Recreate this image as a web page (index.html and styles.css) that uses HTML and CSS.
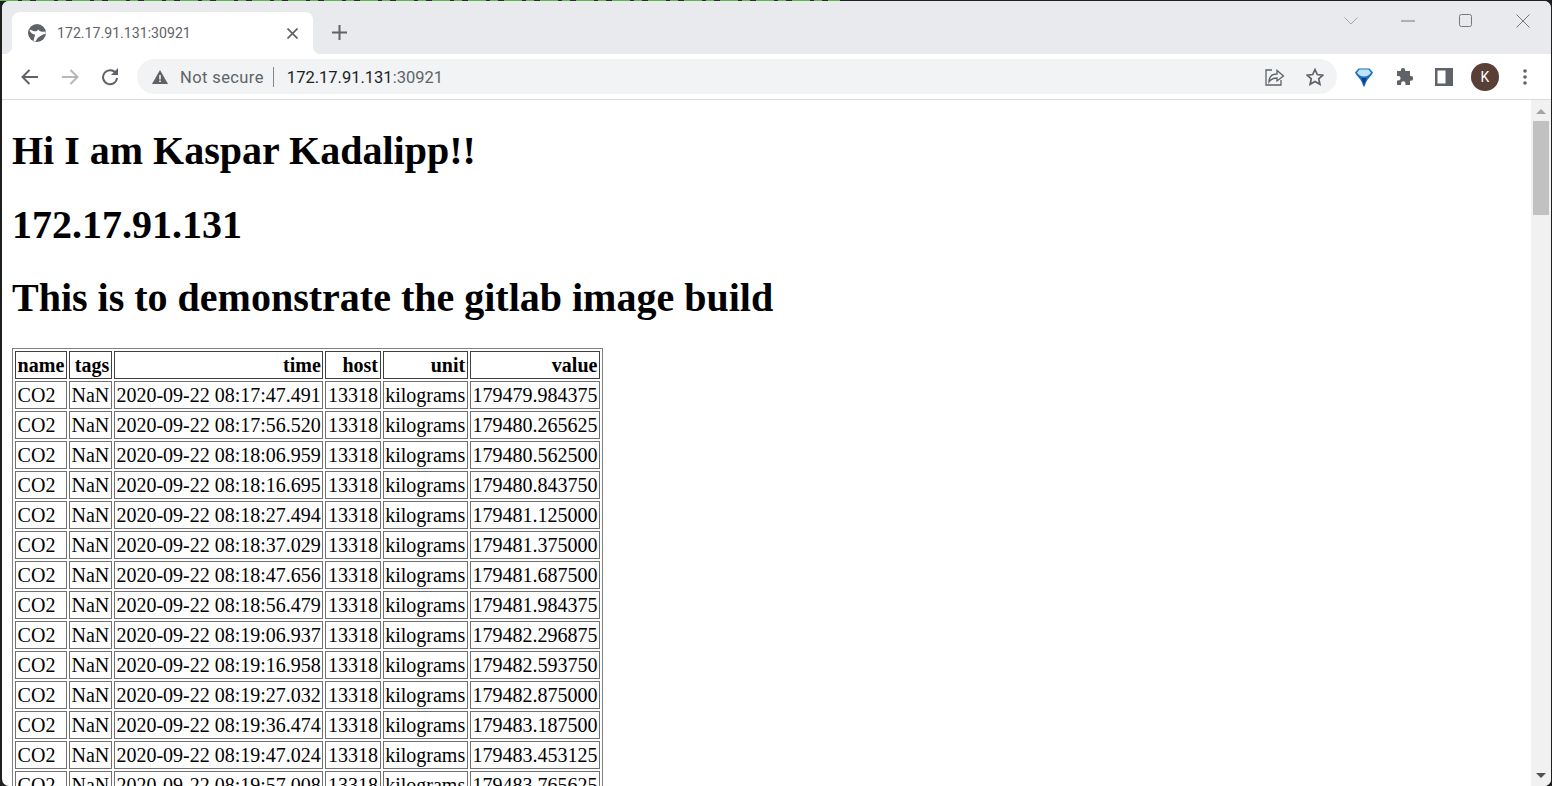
FILE: index.html
```html
<!DOCTYPE html>
<html lang="en">
  <head>
    <meta charset="UTF-8" />
    <meta name="viewport" content="width=device-width, initial-scale=1.0" />
    <title>172.17.91.131:30921</title>
    <link rel="stylesheet" href="styles.css">
  </head>
  <body>
    <div class="desktop-edge"></div>
    <div class="window">
      <!-- Tableiste -->
      <div class="tabstrip">
        <div class="tab">
          <svg class="favicon" width="18" height="18" viewBox="0 0 18 18">
            <circle cx="9" cy="9" r="9" fill="#5f6368"/>
            <path d="M10 5.500C12 8 15 8 17.500 7.500L17.700 10C14.500 10 13 12 11 13C9.500 14 8.500 15.500 7.500 17.500L5.500 16.800C6 14 7 12.500 7 10.500C5 10.500 3 9 1.500 6.500L2 5.500C4 6.500 6 7.500 8 7.300C9 7 9.500 6.500 10 5.500z" fill="#fff"/>
          </svg>
          <span class="tab-title">172.17.91.131:30921</span>
          <svg class="tab-close" width="11" height="11" viewBox="0 0 11 11">
            <path d="M0.500 0.500l10 10M10.500 0.500l-10 10" stroke="#5f6368" stroke-width="1.700"/>
          </svg>
        </div>
        <svg class="new-tab" width="15" height="15" viewBox="0 0 15 15">
          <path d="M7.500 0v15M0 7.500h15" stroke="#5f6368" stroke-width="2"/>
        </svg>
        <div class="window-controls">
          <svg class="ctl-chevron" width="14" height="8" viewBox="0 0 14 8">
            <path d="M0.500 0.500l6.500 6.500 6.500-6.500" fill="none" stroke="#a3a5a9" stroke-width="1"/>
          </svg>
          <svg class="ctl-min" width="14" height="2" viewBox="0 0 14 2">
            <path d="M0 1h14" stroke="#75777b" stroke-width="1"/>
          </svg>
          <svg class="ctl-max" width="14" height="14" viewBox="0 0 14 14">
            <rect x="0.500" y="0.500" width="12" height="12" rx="2" fill="none" stroke="#75777b"/>
          </svg>
          <svg class="ctl-close" width="14" height="14" viewBox="0 0 14 14">
            <path d="M0.500 0.500l13 13M13.500 0.500l-13 13" stroke="#75777b" stroke-width="1"/>
          </svg>
        </div>
      </div>

      <!-- Adressleiste -->
      <div class="toolbar">
        <svg class="nav-icon" width="18" height="16" viewBox="0 0 18 16">
          <path d="M17 8H2M8.500 1L1.500 8l7 7" fill="none" stroke="#5f6368" stroke-width="2"/>
        </svg>
        <svg class="nav-icon" width="18" height="16" viewBox="0 0 18 16">
          <path d="M1 8h15M9.500 1l7 7-7 7" fill="none" stroke="#b5b7ba" stroke-width="2"/>
        </svg>
        <svg class="nav-icon" width="18" height="18" viewBox="0 0 18 18">
          <path d="M15 5.500A7 7 0 1 0 16 10" fill="none" stroke="#5f6368" stroke-width="2"/>
          <path d="M10 7h7V0z" fill="#5f6368"/>
        </svg>
        <div class="omnibox">
          <svg class="warn" width="16" height="14" viewBox="0 0 16 14">
            <path d="M8 0L16 14H0z" fill="#5f6368"/>
            <path d="M7.200 5h1.600v4.500H7.200zM7.200 10.500h1.600V12H7.200z" fill="#f1f3f4"/>
          </svg>
          <span class="not-secure">Not secure</span>
          <span class="divider"></span>
          <span class="url"><span class="host-part">172.17.91.131</span>:30921</span>
          <svg class="share" width="20" height="18" viewBox="0 0 20 18">
            <path d="M7 2H1v15h15v-5" fill="none" stroke="#5f6368" stroke-width="1.300"/>
            <path d="M4 14c0-5 3-8 8-8V2.500L18.500 8 12 13V10c-4 0-6 1-8 4z" fill="none" stroke="#5f6368" stroke-width="1.300"/>
          </svg>
          <svg class="star" width="18" height="18" viewBox="0 0 18 18">
            <path d="M9 1.500l2.300 5 5.500.6-4.100 3.700 1.200 5.400L9 13.400l-4.900 2.800 1.200-5.400L1.200 7.100l5.500-.6z" fill="none" stroke="#5f6368" stroke-width="1.700"/>
          </svg>
        </div>
        <svg class="ext-gem" width="18" height="20" viewBox="0 0 18 20">
          <path d="M3.500 1.500h11L18 5.500C16 10 11.500 12 10.200 18L9 20 7.800 18C6.500 12 2 10 0 5.500z" fill="#1b6ec2"/>
          <path d="M4.500 2.500h9L16 5.500C14 9 11 9.500 9 9.500 7 9.500 4 9 2 5.500z" fill="#bfe3f8"/>
          <path d="M6.500 11h5L9 18z" fill="#0c3f8c"/>
        </svg>
        <svg class="ext-puzzle" width="18" height="18" viewBox="0 0 18 18">
          <path d="M7 0a2.200 2.200 0 0 1 2.200 2.200V3H14v5h.8a2.400 2.400 0 0 1 0 4.800H14V17H9.500v-1.500a2.200 2.200 0 0 0-4.400 0V17H1v-4.500h1.300a2.300 2.300 0 0 0 0-4.600H1V3h3.800v-.8A2.200 2.200 0 0 1 7 0z" fill="#5f6368"/>
        </svg>
        <svg class="ext-panel" width="18" height="18" viewBox="0 0 18 18">
          <path d="M0 0h18v18H0z" fill="#5f6368"/>
          <path d="M2.500 2.500h8v13h-8z" fill="#fff"/>
        </svg>
        <div class="avatar">K</div>
        <svg class="menu-dots" width="4" height="16" viewBox="0 0 4 16">
          <circle cx="2" cy="2" r="1.800" fill="#5f6368"/>
          <circle cx="2" cy="8" r="1.800" fill="#5f6368"/>
          <circle cx="2" cy="14" r="1.800" fill="#5f6368"/>
        </svg>
      </div>

      <!-- Seiteninhalt -->
      <div class="viewport">
        <div class="page">
          <h1>Hi I am Kaspar Kadalipp!!</h1>
          <h1>172.17.91.131</h1>
          <h1>This is to demonstrate the gitlab image build</h1>
          <table class="dataframe" border="1">
            <thead>
              <tr><th>name</th><th>tags</th><th>time</th><th>host</th><th>unit</th><th>value</th></tr>
            </thead>
            <tbody>
              <tr><td>CO2</td><td>NaN</td><td>2020-09-22 08:17:47.491</td><td>13318</td><td>kilograms</td><td>179479.984375</td></tr>
              <tr><td>CO2</td><td>NaN</td><td>2020-09-22 08:17:56.520</td><td>13318</td><td>kilograms</td><td>179480.265625</td></tr>
              <tr><td>CO2</td><td>NaN</td><td>2020-09-22 08:18:06.959</td><td>13318</td><td>kilograms</td><td>179480.562500</td></tr>
              <tr><td>CO2</td><td>NaN</td><td>2020-09-22 08:18:16.695</td><td>13318</td><td>kilograms</td><td>179480.843750</td></tr>
              <tr><td>CO2</td><td>NaN</td><td>2020-09-22 08:18:27.494</td><td>13318</td><td>kilograms</td><td>179481.125000</td></tr>
              <tr><td>CO2</td><td>NaN</td><td>2020-09-22 08:18:37.029</td><td>13318</td><td>kilograms</td><td>179481.375000</td></tr>
              <tr><td>CO2</td><td>NaN</td><td>2020-09-22 08:18:47.656</td><td>13318</td><td>kilograms</td><td>179481.687500</td></tr>
              <tr><td>CO2</td><td>NaN</td><td>2020-09-22 08:18:56.479</td><td>13318</td><td>kilograms</td><td>179481.984375</td></tr>
              <tr><td>CO2</td><td>NaN</td><td>2020-09-22 08:19:06.937</td><td>13318</td><td>kilograms</td><td>179482.296875</td></tr>
              <tr><td>CO2</td><td>NaN</td><td>2020-09-22 08:19:16.958</td><td>13318</td><td>kilograms</td><td>179482.593750</td></tr>
              <tr><td>CO2</td><td>NaN</td><td>2020-09-22 08:19:27.032</td><td>13318</td><td>kilograms</td><td>179482.875000</td></tr>
              <tr><td>CO2</td><td>NaN</td><td>2020-09-22 08:19:36.474</td><td>13318</td><td>kilograms</td><td>179483.187500</td></tr>
              <tr><td>CO2</td><td>NaN</td><td>2020-09-22 08:19:47.024</td><td>13318</td><td>kilograms</td><td>179483.453125</td></tr>
              <tr><td>CO2</td><td>NaN</td><td>2020-09-22 08:19:57.008</td><td>13318</td><td>kilograms</td><td>179483.765625</td></tr>
            </tbody>
          </table>
        </div>
        <div class="scrollbar">
          <div class="arrow-up"></div>
          <div class="thumb"></div>
          <div class="arrow-down"></div>
        </div>
      </div>
    </div>
  </body>
</html>
```

FILE: styles.css
```css
/* Browserfenster */
html, body {
    margin: 0;
    height: 100%;
    overflow: hidden;
    background: #1f1f1f;
}

.desktop-edge {
    width: 840px;
    height: 1px;
    background: repeating-linear-gradient(90deg, #5cb84a 0 18px, #2b2b2b 18px 22px, #5cb84a 22px 30px, #2b2b2b 30px 36px);
}

.window {
    display: flex;
    flex-direction: column;
    height: 785px;
    margin: 0 1px 0 2px;
    border-radius: 7px;
    overflow: hidden;
    background: #fff;
}

/* Tableiste */
.tabstrip {
    display: flex;
    align-items: flex-end;
    height: 53px;
    background: #e8eaed;
}

.tab {
    position: relative;
    display: flex;
    align-items: center;
    width: 301px;
    height: 42px;
    margin-left: 10px;
    padding: 0 15px 0 16px;
    box-sizing: border-box;
    border-radius: 8px 8px 0 0;
    background: #fff;
}

/* kleine Rundungen unten am Tab */
.tab::before,
.tab::after {
    content: "";
    position: absolute;
    bottom: 0;
    width: 8px;
    height: 8px;
}

.tab::before {
    left: -8px;
    background: radial-gradient(circle at 0 0, transparent 8px, #fff 8.500px);
}

.tab::after {
    right: -8px;
    background: radial-gradient(circle at 100% 0, transparent 8px, #fff 8.500px);
}

.favicon {
    margin-right: 11px;
}

.tab-title {
    flex: 1;
    font-family: "Roboto", sans-serif;
    font-size: 14.150px;
    color: #5f6368;
}

.new-tab {
    margin: 0 0 14px 19px;
}

.window-controls {
    display: flex;
    align-items: center;
    align-self: flex-start;
    margin: 13px 0 0 auto;
    padding-right: 21px;
}

.ctl-chevron {
    margin-right: 43px;
}

.ctl-min {
    margin-right: 44px;
}

.ctl-max {
    margin-right: 43px;
}

/* Adressleiste */
.toolbar {
    display: flex;
    align-items: center;
    height: 45px;
    border-bottom: 1px solid #dadce0;
    background: #fff;
}

.nav-icon {
    margin-left: 19px;
    margin-right: 3px;
}

.omnibox {
    display: flex;
    align-items: center;
    width: 1200px;
    height: 35px;
    margin-left: 15px;
    padding-left: 15px;
    box-sizing: border-box;
    border-radius: 18px;
    background: #f1f3f4;
    font-family: "Roboto", sans-serif;
    font-size: 16.500px;
}

.not-secure {
    margin-top: 2px;
    margin-left: 12px;
    letter-spacing: 0.400px;
    color: #5f6368;
}

.divider {
    width: 1px;
    height: 20px;
    margin: 0 13px 0 9px;
    background: #80868b;
}

.url {
    flex: 1;
    margin-top: 2px;
    color: #5f6368;
}

.host-part {
    color: #202124;
}

.share {
    margin-right: 21px;
}

.star {
    margin-right: 13px;
}

.ext-gem {
    margin-left: 18px;
}

.ext-puzzle {
    margin-left: 23px;
}

.ext-panel {
    margin-left: 21px;
}

.avatar {
    width: 28px;
    height: 28px;
    margin-left: 18px;
    border-radius: 50%;
    background: #5a3f36;
    color: #fff;
    font-family: "Roboto", sans-serif;
    font-size: 14px;
    line-height: 28px;
    text-align: center;
}

.menu-dots {
    margin-left: 24px;
}

/* Seiteninhalt */
.viewport {
    display: flex;
    flex: 1;
    min-height: 0;
}

.page {
    flex: 1;
    min-width: 0;
    padding: 0 10px;
    overflow: hidden;
    font-family: "Liberation Serif", "Times New Roman", serif;
    font-size: 20px;
    color: #000;
}

h1 {
    margin: 26.800px 0;
    font-size: 40px;
}

.dataframe {
    border-spacing: 2px;
    border: 1px solid #808080;
}

.dataframe th,
.dataframe td {
    padding: 2px 1.600px 1px;
    border: 1px solid #404040;
}

.dataframe td {
    border-color: #707070;
}

.dataframe th {
    text-align: right;
}

/* Scrollleiste */
.scrollbar {
    display: flex;
    flex-direction: column;
    align-items: center;
    width: 20px;
    background: #f1f1f1;
}

.arrow-up {
    margin-top: 9px;
    border-left: 5px solid transparent;
    border-right: 5px solid transparent;
    border-bottom: 5px solid #a3a3a3;
}

.thumb {
    width: 16px;
    height: 94px;
    margin-top: 7px;
    background: #c1c1c1;
}

.arrow-down {
    margin-top: auto;
    margin-bottom: 8px;
    border-left: 5px solid transparent;
    border-right: 5px solid transparent;
    border-top: 5px solid #505050;
}
```
